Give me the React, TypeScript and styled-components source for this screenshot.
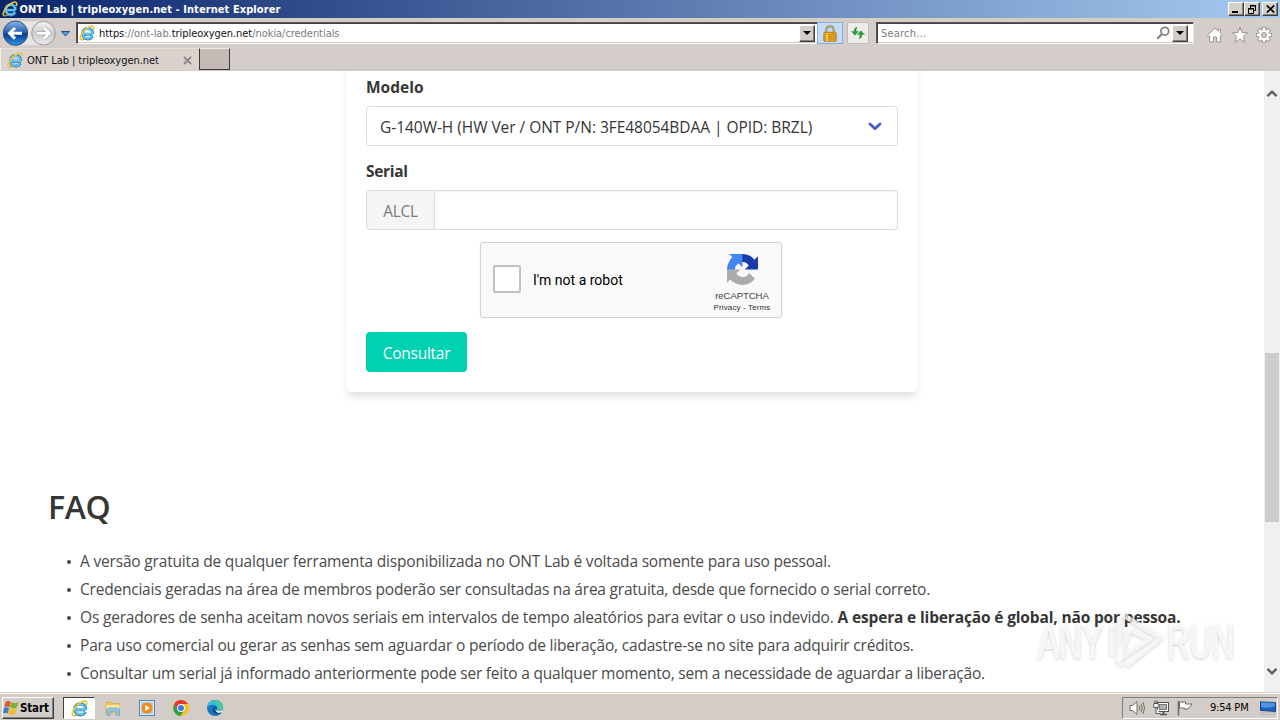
import React from 'react';
import styled, { createGlobalStyle, css } from 'styled-components';

const GlobalStyle = createGlobalStyle`
  * { box-sizing: border-box; }
  html, body { margin: 0; padding: 0; overflow: hidden; background: #fff; }
`;

const tahoma = css`font-family: 'DejaVu Sans Condensed', 'DejaVu Sans', sans-serif;`;
const tahomaBold = css`font-family: 'DejaVu Sans Condensed', 'DejaVu Sans', sans-serif; font-weight: 700;`;
const raised = css`
  border: 1px solid;
  border-color: #fff #404040 #404040 #fff;
  box-shadow: inset -1px -1px 0 #808080;
`;

const Desktop = styled.div`
  width: 1280px;
  height: 720px;
  display: flex;
  flex-direction: column;
  position: relative;
  overflow: hidden;
  font-family: 'Open Sans', 'Noto Sans', sans-serif;
`;

/* ---------- browser chrome ---------- */
const TitleBar = styled.header`
  height: 18px;
  flex: none;
  display: flex;
  align-items: center;
  padding: 0 2px 0 2px;
  background: linear-gradient(90deg, #0a246a, #a6caf0);
`;
const TitleText = styled.span<{ $spacing: number }>`
  ${tahomaBold}
  flex: 1;
  margin-left: 1.5px;
  padding-top: 1px;
  font-size: 11px;
  line-height: 17px;
  letter-spacing: ${(p) => p.$spacing}px;
  color: #fff;
  white-space: nowrap;
`;
const WindowButton = styled.button<{ $gap?: number }>`
  ${raised}
  width: 16px;
  height: 14px;
  padding: 0;
  margin-left: ${(p) => p.$gap ?? 0}px;
  background: #d4d0c8;
  display: flex;
  align-items: center;
  justify-content: center;
`;
const NavBar = styled.div`
  height: 30px;
  flex: none;
  display: flex;
  align-items: flex-start;
  padding: 4px 0 0 2px;
  background: linear-gradient(180deg, #d2cfc4 0, #d5cdc9 5px);
`;
const NavButtons = styled.div`
  width: 74px;
  height: 26px;
  margin-top: -2px;
  display: flex;
`;
const Field = styled.div<{ $width: number; $ml?: number }>`
  width: ${(p) => p.$width}px;
  height: 22px;
  margin-left: ${(p) => p.$ml ?? 0}px;
  display: flex;
  align-items: center;
  background: #fff;
  border: 1px solid;
  border-color: #5a5154 #e9e4e0 #fff #5a5154;
  box-shadow: inset 0 1px 0 #4a3f4a, inset 1px 0 0 #4a3f4a, inset 0 -1px 0 #d5c8c4;
  padding: 1px 2px 1px 2px;
`;
const FieldText = styled.span<{ $spacing: number; $pad?: number }>`
  ${tahoma}
  flex: 1;
  margin-top: 2px;
  font-size: 11px;
  line-height: 18px;
  letter-spacing: ${(p) => p.$spacing}px;
  padding-left: ${(p) => p.$pad ?? 0}px;
  color: #7b7b7b;
  white-space: nowrap;
  b { font-weight: 400; color: #111; }
`;
const DropButton = styled.button<{ $inset?: boolean }>`
  ${raised}
  width: 16px;
  height: 17px;
  padding: 0;
  margin: ${(p) => (p.$inset ? '0 3px 0 2px' : '0')};
  background: #d4ccc8;
  display: flex;
  align-items: center;
  justify-content: center;
`;
const ToolBox = styled.div<{ $width: number; $active?: boolean; $ml: number }>`
  width: ${(p) => p.$width}px;
  height: 22px;
  margin-left: ${(p) => p.$ml}px;
  display: flex;
  align-items: center;
  justify-content: center;
  border: 1px solid ${(p) => (p.$active ? '#86aede' : '#c0b9b4')};
  border-radius: ${(p) => (p.$active ? 0 : 2)}px;
  background: ${(p) => (p.$active ? '#c3dcf8' : '#eeebe8')};
`;
const Commands = styled.div`
  display: flex;
  gap: 6.5px;
  margin: 4px 0 0 12px;
`;
const TabBar = styled.div`
  height: 23px;
  flex: none;
  display: flex;
  background: #d5cdc9;
  border-bottom: 1px solid #d5ccc6;
  box-shadow: inset 0 -4px 0 -3px #cbc6c0;
`;
const Tab = styled.div`
  width: 199px;
  display: flex;
  align-items: center;
  padding: 1px 7px 0 6px;
  background: #d9d2cd;
  border-left: 1px solid #f3f0ed;
  border-top: 1px solid #e6e1dc;
`;
const TabTitle = styled.span<{ $spacing: number }>`
  ${tahoma}
  flex: 1;
  margin-left: 4px;
  font-size: 11px;
  letter-spacing: ${(p) => p.$spacing}px;
  color: #111;
  white-space: nowrap;
`;
const NewTab = styled.div`
  width: 31px;
  height: 22px;
  background: #c4bbb7;
  border: 1px solid;
  border-color: #efebe8 #3c3838 #3c3838 #3c3838;
`;

/* ---------- web page ---------- */
const Viewport = styled.div`
  height: 621px;
  flex: none;
  display: flex;
`;
const Page = styled.main`
  flex: 1;
  overflow: hidden;
  background: #fff;
  color: #4a4a4a;
`;
const Card = styled.section`
  width: 572px;
  height: 351px;
  margin: -30px 0 0 346px;
  padding: 36px 20px 20px;
  display: flex;
  flex-direction: column;
  background: #fff;
  border-radius: 6px;
  box-shadow: 0 8px 10px -3px rgba(10, 10, 10, 0.12), 0 0 3px rgba(10, 10, 10, 0.05);
`;
const Label = styled.label<{ $spacing: number }>`
  height: 20px;
  margin-bottom: 9px;
  font-size: 15.5px;
  line-height: 20px;
  font-weight: 700;
  letter-spacing: ${(p) => p.$spacing}px;
  color: #363636;
`;
const Select = styled.div`
  height: 40px;
  margin-bottom: 15px;
  padding: 1px 15px 0 13px;
  display: flex;
  align-items: center;
  justify-content: space-between;
  border: 1px solid #dbdbdb;
  border-radius: 4px;
  color: #363636;
`;
const SelectText = styled.span`
  padding-top: 1px;
  font-size: 15.5px;
  letter-spacing: -0.04px;
  white-space: nowrap;
`;
const Group = styled.div`
  height: 40px;
  display: flex;
`;
const Addon = styled.span`
  width: 69px;
  padding-top: 2px;
  display: flex;
  align-items: center;
  justify-content: center;
  background: #f5f5f5;
  border: 1px solid #dbdbdb;
  border-radius: 4px 0 0 4px;
  font-size: 15.5px;
  letter-spacing: -0.3px;
  color: #7a7a7a;
`;
const Input = styled.div`
  flex: 1;
  border: 1px solid #dbdbdb;
  border-left: 0;
  border-radius: 0 4px 4px 0;
  box-shadow: inset 0 1px 2px rgba(10, 10, 10, 0.05);
`;
const Captcha = styled.div`
  width: 302px;
  height: 76px;
  margin: 12px 0 14px 114px;
  padding-left: 12px;
  display: flex;
  align-items: center;
  background: #f9f9f9;
  border: 1px solid #d3d3d3;
  border-radius: 3px;
  box-shadow: 0 0 3px rgba(0, 0, 0, 0.06);
  font-family: Roboto, sans-serif;
`;
const CheckBox = styled.span`
  width: 28px;
  height: 28px;
  margin-top: -2px;
  background: #fff;
  border: 2px solid #c1c1c1;
  border-radius: 2px;
`;
const CaptchaText = styled.span`
  flex: 1;
  margin-left: 12px;
  font-size: 14px;
  color: #000;
`;
const CaptchaBrand = styled.div`
  width: 78px;
  height: 74px;
  padding-top: 11px;
  display: flex;
  flex-direction: column;
  align-items: center;
  color: #444;
`;
const BrandName = styled.span`
  margin-top: 5px;
  font-family: 'Liberation Sans', sans-serif;
  font-size: 9.6px;
  line-height: 12px;
  letter-spacing: -0.1px;
`;
const BrandLinks = styled.span`
  font-family: 'Liberation Sans', sans-serif;
  font-size: 8px;
  line-height: 12px;
  letter-spacing: 0.13px;
  color: #333;
`;
const Submit = styled.button`
  width: 101px;
  height: 40px;
  padding: 2px 0 0;
  border: 0;
  border-radius: 4px;
  background: #00d1b2;
  color: #fff;
  font-family: inherit;
  font-size: 15.5px;
  letter-spacing: -0.27px;
`;
const Faq = styled.section`
  margin: 91px 0 0 48px;
`;
const FaqTitle = styled.h1`
  margin: 0;
  height: 48px;
  font-size: 32px;
  line-height: 48px;
  font-weight: 600;
  letter-spacing: -0.3px;
  color: #363636;
`;
const FaqList = styled.ul`
  margin: 16px 0 0;
  padding: 0;
  list-style: none;
`;
const FaqItem = styled.li<{ $spacing: number }>`
  height: 28px;
  display: flex;
  align-items: center;
  font-size: 15.5px;
  line-height: 28px;
  letter-spacing: ${(p) => p.$spacing}px;
  white-space: pre;
  &::before {
    content: '';
    width: 4px;
    height: 4px;
    margin: 2px 9px 0 19px;
    border-radius: 50%;
    background: #4a4a4a;
  }
`;
const Strong = styled.strong<{ $spacing: number }>`
  color: #363636;
  letter-spacing: ${(p) => p.$spacing}px;
`;
const ScrollBar = styled.div`
  width: 16px;
  display: flex;
  flex-direction: column;
  align-items: center;
  background: #f0f0f0;
  padding: 18px 0 16px;
`;
const Thumb = styled.div`
  width: 14px;
  height: 169px;
  margin: 255px 0 auto;
  background: #cdcdcd;
`;

/* ---------- watermark ---------- */
const Watermark = styled.svg`
  position: absolute;
  left: 1030px;
  top: 604px;
  overflow: visible;
  filter: drop-shadow(0 1px 1.5px rgba(0, 0, 0, 0.24));
`;

/* ---------- taskbar ---------- */
const TaskBar = styled.footer`
  height: 28px;
  flex: none;
  display: flex;
  align-items: center;
  padding: 3px 2px 0 2px;
  background: #d4ccc6;
  border-top: 1px solid #d4d0c8;
  box-shadow: inset 0 1px 0 #fff;
`;
const StartButton = styled.button`
  ${raised}
  ${tahomaBold}
  width: 52px;
  height: 22px;
  padding: 0 0 1px;
  display: flex;
  align-items: center;
  gap: 1px;
  background: #d4ccc6;
  color: #000;
  font-size: 11.5px;
  letter-spacing: -0.15px;
`;
const ActiveTask = styled.div`
  width: 32px;
  height: 22px;
  margin: 0 10px 0 9px;
  display: flex;
  align-items: center;
  justify-content: center;
  background: #fff;
  border: 1px solid;
  border-color: #404040 #fff #fff #404040;
`;
const Launchers = styled.div`
  display: flex;
  flex: 1;
  gap: 18px;
`;
const Tray = styled.div`
  width: 156px;
  height: 22px;
  padding: 0 1px 0 6px;
  display: flex;
  align-items: center;
  border: 1px solid;
  border-color: #808080 #fff #fff #808080;
`;
const TrayIcons = styled.div`
  display: flex;
  gap: 8px;
`;
const Clock = styled.span`
  ${tahoma}
  flex: 1;
  padding: 0 0 2px 17px;
  font-size: 11px;
  letter-spacing: -0.2px;
  color: #000;
  white-space: nowrap;
`;

/* ---------- icons ---------- */
const IeIcon = ({ size = 16 }: { size?: number }) => (
  <svg width={size} height={size} viewBox="0 0 16 16" fill="none">
    <path d="M13.6 9.2H5.3M13.4 11.2C12.5 13 10.8 14 8.8 14C5.7 14 3.6 11.7 3.6 8.8C3.6 5.9 5.8 3.6 8.7 3.6C11.8 3.6 13.8 5.8 13.6 9" stroke="#2c86c6" strokeWidth="3" />
    <path d="M13.2 8.9H5.3M12.8 11.1C12 12.8 10.6 13.5 8.8 13.5C6 13.5 4 11.5 4 8.8C4 6.1 6 4 8.7 4C11.4 4 13.2 6 13.2 8.7" stroke="#68caf3" strokeWidth="1.8" />
    <path d="M2.2 14.6C.2 13.6 1.5 9.6 5 5.8C8.6 2 12.7.1 14.2 1.5C15 2.2 14.9 3.5 14.3 5" stroke="#f2c72e" strokeWidth="1.6" />
    <path d="M2.2 14.6C3.3 15.2 5 14.6 6.6 13.5" stroke="#d9a514" strokeWidth="1.2" />
  </svg>
);

const BackForward = () => (
  <svg width="74" height="26" viewBox="0 0 74 26">
    <defs>
      <linearGradient id="back" x1="0" y1="0" x2="0" y2="1">
        <stop offset="0" stopColor="#8db4e6" />
        <stop offset=".45" stopColor="#2d62b5" />
        <stop offset=".55" stopColor="#0b3c92" />
        <stop offset="1" stopColor="#2f9be8" />
      </linearGradient>
      <linearGradient id="fwd" x1="0" y1="0" x2="0" y2="1">
        <stop offset="0" stopColor="#f4f4f5" />
        <stop offset=".5" stopColor="#c9cbcf" />
        <stop offset="1" stopColor="#eceded" />
      </linearGradient>
    </defs>
    <path d="M14 1.4H42A12 12 0 0 1 42 25.2H14Z" fill="#e8e5e3" />
    <circle cx="13.5" cy="13.2" r="12.2" fill="url(#back)" stroke="#33527f" />
    <circle cx="41.5" cy="13.2" r="11.8" fill="url(#fwd)" stroke="#9a9a9c" />
    <path d="M20 13.3H8M13 8L7.6 13.3L13 18.6" fill="none" stroke="#fff" strokeWidth="3" />
    <path d="M35 13.3H47M42 8L47.4 13.3L42 18.6" fill="none" stroke="#aaacb0" strokeWidth="4" />
    <path d="M35 13.3H47M42 8L47.4 13.3L42 18.6" fill="none" stroke="#fff" strokeWidth="2.6" />
    <path d="M59.5 11.5H67.5L63.5 16Z" fill="#4fa3dc" stroke="#194f86" />
  </svg>
);

const Arrow = () => (
  <svg width="8" height="4" viewBox="0 0 8 4"><path d="M0 0H8L4 4Z" fill="#000" /></svg>
);

const LockIcon = () => (
  <svg width="14" height="17" viewBox="0 0 14 17">
    <path d="M3.3 8V5A3.7 3.7 0 0 1 10.7 5V8" fill="none" stroke="#8f7a45" strokeWidth="2.2" />
    <path d="M3.3 8V5A3.7 3.7 0 0 1 10.7 5V8" fill="none" stroke="#dccb95" strokeWidth=".8" />
    <rect x=".8" y="7.3" width="12.4" height="9" rx="1" fill="#e5a51c" stroke="#a8741a" strokeWidth=".8" />
    <path d="M1.5 9.5H12.5M1.5 11.8H12.5M1.5 14H12.5" stroke="#c07f10" strokeWidth=".7" />
    <path d="M4 8V16" stroke="#f8d469" strokeWidth="1.4" />
  </svg>
);

const RefreshIcon = () => (
  <svg width="16" height="16" viewBox="0 0 16 16" fill="#2d9a3b">
    <path d="M7.5 2.2C5 2 4 3.5 3.9 6.3H1L5 10.4L9 6.3H6.3C6.3 4.8 6.6 3.4 7.5 2.2Z" />
    <path d="M8.5 13.8C11 14 12 12.5 12.1 9.7H15L11 5.6L7 9.7H9.7C9.7 11.2 9.4 12.6 8.5 13.8Z" />
  </svg>
);

const SearchIcon = () => (
  <svg width="14" height="14" viewBox="0 0 14 14" fill="none" stroke="#818084">
    <circle cx="8.8" cy="5.2" r="3.9" strokeWidth="1.7" />
    <path d="M5.8 8.2L1.2 12.8" strokeWidth="2.2" />
  </svg>
);

const HomeIcon = () => (
  <svg width="18" height="18" viewBox="0 0 18 18">
    <path d="M9 2L1.4 9.3L2.6 10.6L3.6 9.8V16H7.4V11H10.6V16H14.4V9.8L15.4 10.6L16.6 9.3L14.4 7.2V3.2H12.3V5.1Z" fill="#fff" stroke="#989390" />
  </svg>
);
const StarIcon = () => (
  <svg width="18" height="18" viewBox="0 0 18 18">
    <path d="M9 1.2L11.1 6.6L16.8 6.9L12.4 10.5L13.9 16.2L9 13L4.1 16.2L5.6 10.5L1.2 6.9L6.9 6.6Z" fill="#fff" stroke="#989390" />
  </svg>
);
const GearIcon = () => (
  <svg width="18" height="18" viewBox="0 0 18 18">
    <g stroke="#989390" strokeWidth="4.2">
      <path d="M9 1V17M1 9H17M3.3 3.3L14.7 14.7M14.7 3.3L3.3 14.7" />
    </g>
    <g stroke="#fff" strokeWidth="2.4">
      <path d="M9 1.8V16.2M1.8 9H16.2M3.9 3.9L14.1 14.1M14.1 3.9L3.9 14.1" />
    </g>
    <circle cx="9" cy="9" r="5.2" fill="#fff" />
    <circle cx="9" cy="9" r="2.5" fill="#d5cdc9" stroke="#989390" />
  </svg>
);

const RecaptchaLogo = () => (
  <svg width="31" height="31" viewBox="0 0 64 64">
    <path fill="#1c3aa9" d="M64 31.96c0-.46-.01-.92-.03-1.37V4.64l-7.18 7.17C50.92 4.62 41.98.02 31.97.02c-10.42 0-19.68 4.98-25.52 12.69l11.76 11.89a15.6 15.6 0 0 1 4.77-5.35c2.05-1.6 4.96-2.91 8.99-2.91.49 0 .86.06 1.14.16 4.99.4 9.32 3.15 11.87 7.15l-8.32 8.32L64 31.96" />
    <path fill="#4285f4" d="M31.86.02 4.55.03l7.17 7.17C4.54 13.08 0 22.02 0 32.02c0 10.42 4.9 19.69 12.6 25.53l11.9-11.76a15.6 15.6 0 0 1-5.35-4.77c-1.6-2.05-2.91-4.96-2.91-8.99 0-.49.06-.86.16-1.14.4-4.99 3.15-9.32 7.15-11.87l8.31 8.32L31.86.02" />
    <path fill="#ababab" d="M0 32.03v27.4l7.22-7.18C13.1 59.44 22.04 64 32.05 64c10.42 0 19.67-4.94 25.51-12.65L45.8 39.46a15.6 15.6 0 0 1-4.77 5.35c-2.05 1.6-4.96 2.91-8.99 2.91-.49 0-.86-.06-1.14-.16-4.99-.4-9.32-3.15-11.87-7.15l8.32-8.32L0 32.03" />
  </svg>
);

const Chevron = ({ up }: { up?: boolean }) => (
  <svg width="12" height="9" viewBox="0 0 12 9" fill="none" stroke="#606060" strokeWidth="2.4">
    <path d={up ? 'M1.5 7.2L6 2.6L10.5 7.2' : 'M1.5 1.8L6 6.4L10.5 1.8'} />
  </svg>
);

const WindowsFlag = () => (
  <svg width="16" height="16" viewBox="0 0 16 16">
    <path d="M2.8 1.8C4.6.8 6.3.9 7.8 1.9L6.4 7.3C5 6.4 3.3 6.3 1.4 7.2Z" fill="#e4572a" />
    <path d="M8.4 2.3C10.5 3.4 12.6 3.2 15.4 2.2L13.6 7.9C11.3 8.7 9 8.6 7 7.6Z" fill="#7db52f" />
    <path d="M1.1 7.9C3 7 4.7 7.2 6.1 8L4.7 13.6C3.2 12.7 1.6 12.6-.2 13.5Z" fill="#3a80d2" />
    <path d="M6.7 8.4C8.8 9.4 11 9.4 13.4 8.5L11.8 14.2C9.5 15.1 7.2 15 5.3 14Z" fill="#f6be26" />
  </svg>
);

const FolderIcon = () => (
  <svg width="16" height="16" viewBox="0 0 16 16">
    <path d="M1 2H6L7.2 3.5H14.5V13H1Z" fill="#edc862" stroke="#c9a23d" strokeWidth=".6" />
    <path d="M1.4 5H14.5V9H1.4Z" fill="#fbe7a0" />
    <path d="M2 15.5V9.8Q2 8 4 8H12.5Q14.5 8 14.5 9.8V15.5H11.6V11.3H5V15.5Z" fill="#8ec9ea" stroke="#5c9fc8" strokeWidth=".6" />
  </svg>
);
const PlayerIcon = () => (
  <svg width="16" height="16" viewBox="0 0 16 16">
    <rect x=".5" y=".5" width="15" height="15" fill="#dcebf8" stroke="#4c87bd" />
    <rect x="2.2" y="2.2" width="11.6" height="11.6" fill="#a8c8e4" />
    <circle cx="8" cy="8" r="5.5" fill="#f28a18" />
    <path d="M6.3 4.9L11.1 8L6.3 11.1Z" fill="#fff" />
  </svg>
);
const ChromeIcon = () => (
  <svg width="16" height="16" viewBox="0 0 16 16">
    <circle cx="8" cy="8" r="8" fill="#fbc117" />
    <path d="M8 8V4.2H1.2A8 8 0 0 0 7.3 16L11.3 10Z" fill="#2ea14d" />
    <path d="M1.1 4A8 8 0 0 1 14.9 4H8L4.6 10Z" fill="#e23b2e" />
    <circle cx="8" cy="8" r="3.9" fill="#fff" />
    <circle cx="8" cy="8" r="3" fill="#3a7df0" />
  </svg>
);
const EdgeIcon = () => (
  <svg width="16" height="16" viewBox="0 0 16 16">
    <circle cx="8" cy="8" r="8" fill="#1578c9" />
    <path d="M.2 7.3C.8 3 4.2 0 8.2 0C12.8 0 16 3.3 16 6.8C16 9.5 14 11 11.8 11C10.2 11 9.4 10.4 9.4 9.9C9.4 9.4 10.1 9.1 10.1 8C10.1 6.2 8.2 4.8 5.8 4.8C3.3 4.8 1.2 5.9.2 7.3Z" fill="#36bfd0" />
    <path d="M8.2 0C12.8 0 16 3.3 16 6.8C16 9.5 14 11 11.8 11C10.2 11 9.4 10.4 9.4 9.9C13 8 12 3 6 .3Z" fill="#4fcd86" opacity=".7" />
    <path d="M5.6 10.2C5.6 8.4 6.6 7 8 6.4C9.4 6.7 10.1 7.4 10.1 8.2C10.1 9 9.4 9.4 9.4 9.9C9.4 10.4 10.2 11 11.8 11C12.9 11 14 10.7 14.9 10.2L15 11.8C13.6 14 11.4 14.6 9.9 14.3C7.5 13.8 5.6 12.3 5.6 10.2Z" fill="#104d91" />
    <path d="M9.4 9.9C9.4 10.4 10.2 11 11.8 11C13.2 11 14.3 10.5 15.1 10L16 12L12 13C9.5 12.8 8.3 11 8.5 9Z" fill="#e4edf2" />
  </svg>
);

const SpeakerIcon = () => (
  <svg width="16" height="16" viewBox="0 0 16 16" fill="none" stroke="#6f6c68">
    <path d="M1 5.5H3.5L8 1.5V14.5L3.5 10.5H1Z" fill="#fff" />
    <path d="M10 5.5Q11.5 8 10 10.5M12 3.6Q14.4 8 12 12.4M14 2Q17 8 14 14" />
  </svg>
);
const NetworkIcon = () => (
  <svg width="16" height="16" viewBox="0 0 16 16" fill="none" stroke="#55524f">
    <rect x="4.5" y="2.5" width="11" height="9" fill="#fff" />
    <rect x="6.5" y="4.5" width="7" height="5" fill="#aeb0b0" stroke="#777" />
    <path d="M7 14.5H14M10.5 11.5V14" strokeWidth="1.6" />
    <path d="M.8 3.5H5.2V7.5H.8ZM2 .5V3.5M4 .5V3.5M3 7.5V13.5H7" fill="#fff" />
  </svg>
);
const FlagIcon = () => (
  <svg width="16" height="16" viewBox="0 0 16 16" fill="none" stroke="#6f6c68">
    <path d="M1.5 1V15.5" strokeWidth="1.6" />
    <path d="M2.5 2H8.5V4H15L13 6.5L11 9H7.5V8H2.5Z" fill="#fff" />
  </svg>
);
const DesktopIcon = () => (
  <svg width="16" height="14" viewBox="0 0 16 14">
    <path d="M.5.8L15.5 1.6V10.5L.5 9.4Z" fill="#1f62bd" stroke="#16458b" />
    <path d="M1 1.3L15 2V5Q8 8 1 6Z" fill="#4e93df" />
    <path d="M1 12H15V13.3H1Z" fill="#eef0f2" stroke="#8a8a8a" strokeWidth=".5" />
  </svg>
);

const faq = [
  { text: 'A versão gratuita de qualquer ferramenta disponibilizada no ONT Lab é voltada somente para uso pessoal.', spacing: -0.18 },
  { text: 'Credenciais geradas na área de membros poderão ser consultadas na área gratuita, desde que fornecido o serial correto.', spacing: -0.215 },
  { text: 'Os geradores de senha aceitam novos seriais em intervalos de tempo aleatórios para evitar o uso indevido. ', spacing: -0.18, strong: 'A espera e liberação é global, não por pessoa.' },
  { text: 'Para uso comercial ou gerar as senhas sem aguardar o período de liberação, cadastre-se no site para adquirir créditos.', spacing: -0.197 },
  { text: 'Consultar um serial já informado anteriormente pode ser feito a qualquer momento, sem a necessidade de aguardar a liberação.', spacing: -0.215 },
];

export default function App() {
  return (
    <Desktop>
      <GlobalStyle />
      <TitleBar>
        <IeIcon />
        <TitleText $spacing={0.08}>ONT Lab | tripleoxygen.net - Internet Explorer</TitleText>
        <WindowButton>
          <svg width="10" height="8" viewBox="0 0 10 8"><path d="M1 6H7V8H1Z" /></svg>
        </WindowButton>
        <WindowButton>
          <svg width="10" height="9" viewBox="0 0 10 9" fill="none" stroke="#000">
            <path d="M3.5 3V.5H8.5V5.5H7M3 1H9M1.5 3.5H6.5V8.5H1.5ZM1 4H7" />
          </svg>
        </WindowButton>
        <WindowButton $gap={2}>
          <svg width="9" height="8" viewBox="0 0 9 8"><path d="M.8.5L8.2 7.5M8.2.5L.8 7.5" stroke="#000" strokeWidth="1.7" /></svg>
        </WindowButton>
      </TitleBar>

      <NavBar>
        <NavButtons><BackForward /></NavButtons>
        <Field $width={742}>
          <IeIcon />
          <FieldText $spacing={-0.05} $pad={4}>
            <b>https</b>://ont-lab.<b>tripleoxygen.net</b>/nokia/credentials
          </FieldText>
          <DropButton><Arrow /></DropButton>
        </Field>
        <ToolBox $width={26} $ml={-1} $active><LockIcon /></ToolBox>
        <ToolBox $width={22} $ml={4}><RefreshIcon /></ToolBox>
        <Field $width={318} $ml={7}>
          <FieldText $spacing={0.2} $pad={2}>Search...</FieldText>
          <SearchIcon />
          <DropButton $inset><Arrow /></DropButton>
        </Field>
        <Commands><HomeIcon /><StarIcon /><GearIcon /></Commands>
      </NavBar>

      <TabBar>
        <Tab>
          <IeIcon />
          <TabTitle $spacing={-0.05}>ONT Lab | tripleoxygen.net</TabTitle>
          <svg width="9" height="9" viewBox="0 0 9 9"><path d="M1 1L8 8M8 1L1 8" stroke="#8c8785" strokeWidth="1.8" /></svg>
        </Tab>
        <NewTab />
      </TabBar>

      <Viewport>
        <Page>
          <Card>
            <Label $spacing={0}>Modelo</Label>
            <Select>
              <SelectText>G-140W-H (HW Ver / ONT P/N: 3FE48054BDAA | OPID: BRZL)</SelectText>
              <svg width="14" height="10" viewBox="0 0 14 10">
                <path d="M2 2L7 6.6L12 2" fill="none" stroke="#485fc7" strokeWidth="2.8" strokeLinecap="round" strokeLinejoin="round" />
              </svg>
            </Select>
            <Label $spacing={-0.3}>Serial</Label>
            <Group>
              <Addon>ALCL</Addon>
              <Input />
            </Group>
            <Captcha>
              <CheckBox />
              <CaptchaText>I'm not a robot</CaptchaText>
              <CaptchaBrand>
                <RecaptchaLogo />
                <BrandName>reCAPTCHA</BrandName>
                <BrandLinks>Privacy - Terms</BrandLinks>
              </CaptchaBrand>
            </Captcha>
            <Submit>Consultar</Submit>
          </Card>

          <Faq>
            <FaqTitle>FAQ</FaqTitle>
            <FaqList>
              {faq.map((item) => (
                <FaqItem key={item.text} $spacing={item.spacing}>
                  {item.text}
                  {item.strong && <Strong $spacing={-0.15}>{item.strong}</Strong>}
                </FaqItem>
              ))}
            </FaqList>
          </Faq>
        </Page>
        <ScrollBar>
          <Chevron up />
          <Thumb />
          <Chevron />
        </ScrollBar>
      </Viewport>

      <TaskBar>
        <StartButton><WindowsFlag />Start</StartButton>
        <ActiveTask><IeIcon size={17} /></ActiveTask>
        <Launchers><FolderIcon /><PlayerIcon /><ChromeIcon /><EdgeIcon /></Launchers>
        <Tray>
          <TrayIcons><SpeakerIcon /><NetworkIcon /><FlagIcon /></TrayIcons>
          <Clock>9:54 PM</Clock>
          <DesktopIcon />
        </Tray>
      </TaskBar>

      <Watermark width="210" height="74" viewBox="0 0 210 74">
        <g fill="#fff" fillOpacity=".7" stroke="#fff" strokeOpacity=".7" strokeWidth="1.2" fontFamily="'Liberation Sans', sans-serif" fontSize="49">
          <text x="8" y="54" textLength="65" lengthAdjust="spacingAndGlyphs">ANY</text>
          <text x="137" y="54" textLength="67" lengthAdjust="spacingAndGlyphs">RUN</text>
        </g>
        <g fill="none" stroke="#fff" strokeOpacity=".7" strokeLinejoin="round">
          <path d="M82 20V52M90 12V62" strokeWidth="5" />
          <path d="M91 10L131 34L96 62M100 26L120 35L88 56Z" strokeWidth="5" />
        </g>
      </Watermark>
    </Desktop>
  );
}
